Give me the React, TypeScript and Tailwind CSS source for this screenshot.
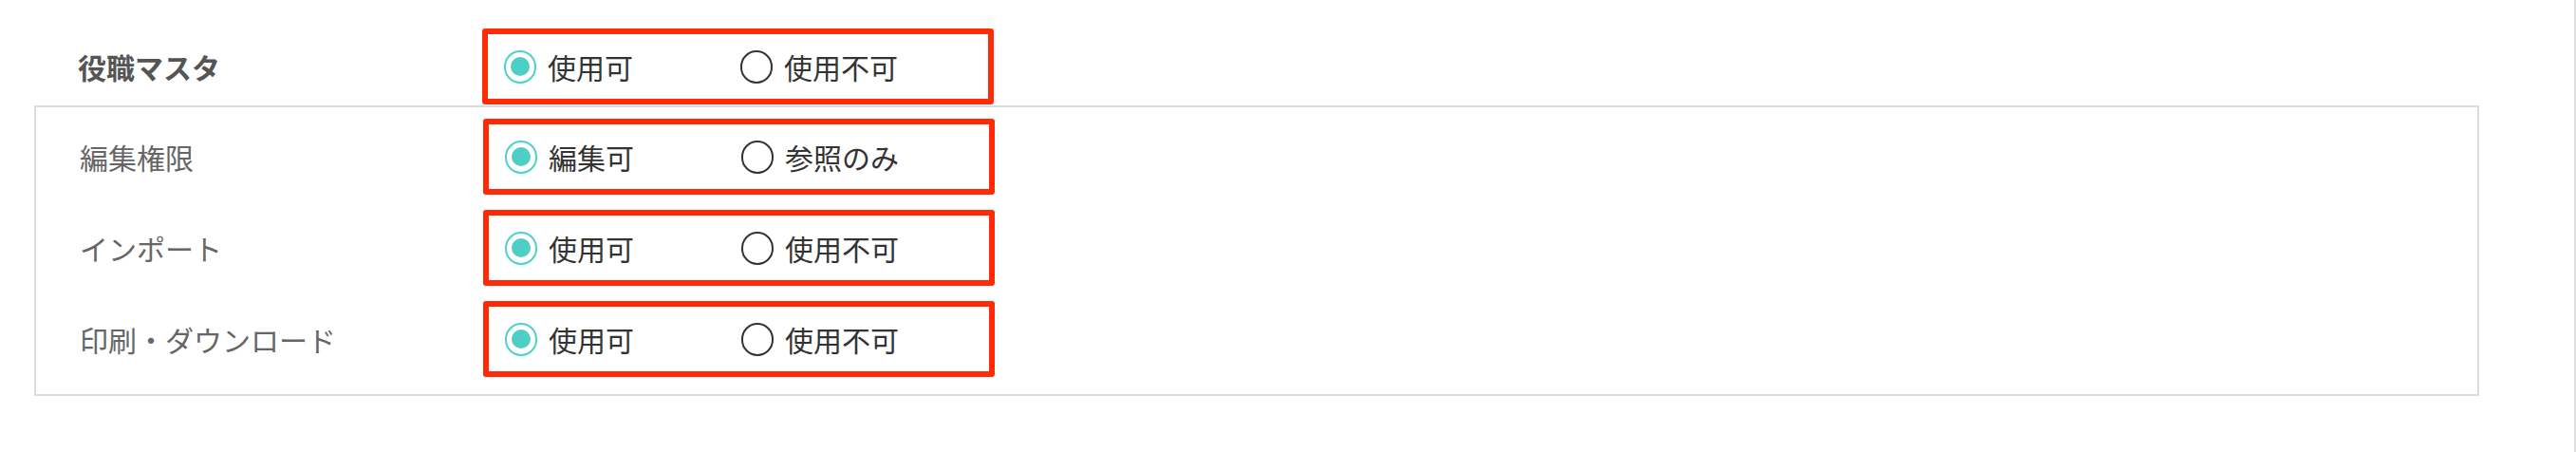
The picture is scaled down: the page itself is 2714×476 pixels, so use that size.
const JP = "font-['Noto_Sans_CJK_JP','Noto_Sans',sans-serif]";

type Row = { label: string; on: string; off: string; bold?: boolean };

const TOP: Row = { label: "役職マスタ", on: "使用可", off: "使用不可", bold: true };

const ROWS: Row[] = [
  { label: "編集権限", on: "編集可", off: "参照のみ" },
  { label: "インポート", on: "使用可", off: "使用不可" },
  { label: "印刷・ダウンロード", on: "使用可", off: "使用不可" },
];

function Radio({ checked, text }: { checked: boolean; text: string }) {
  return (
    <label className="flex items-center cursor-pointer">
      {checked ? (
        <span className="flex items-center justify-center w-[34px] h-[35px] rounded-full border-2 border-[#4fd1c9] bg-white">
          <span className="w-[20px] h-[20px] rounded-full bg-[#4dcfc7]" />
        </span>
      ) : (
        <span className="w-[34px] h-[35px] rounded-full border-2 border-[#333333] bg-white" />
      )}
      <span className="ml-[12px] text-[30px] leading-none text-[#333333]">{text}</span>
    </label>
  );
}

function Choice({ row }: { row: Row }) {
  return (
    <div className="flex items-center w-[539px] h-[80px] border-[6px] border-[#ff2a06] rounded-[3px] pl-[17px]">
      <div className="w-[249px]">
        <Radio checked text={row.on} />
      </div>
      <Radio checked={false} text={row.off} />
    </div>
  );
}

export default function App() {
  return (
    <div className={`w-full h-[476px] bg-white border-r-2 border-[#dedede] ${JP}`}>
      <div className="ml-[36px] pt-[30px]">
        {/* 親項目 */}
        <div className="flex items-center pl-[46px]">
          <div className="w-[426px] text-[30px] leading-none font-bold text-[#555555]">
            {TOP.label}
          </div>
          <Choice row={TOP} />
        </div>

        {/* 子項目 */}
        <div className="mt-px w-[2576px] border-2 border-[#dcdcdc] pt-[12px] pb-[18px] flex flex-col gap-4">
          {ROWS.map(row => (
            <div key={row.label} className="flex items-center pl-[46px]">
              <div className="w-[425px] text-[30px] leading-none text-[#666666]">{row.label}</div>
              <Choice row={row} />
            </div>
          ))}
        </div>
      </div>
    </div>
  );
}
